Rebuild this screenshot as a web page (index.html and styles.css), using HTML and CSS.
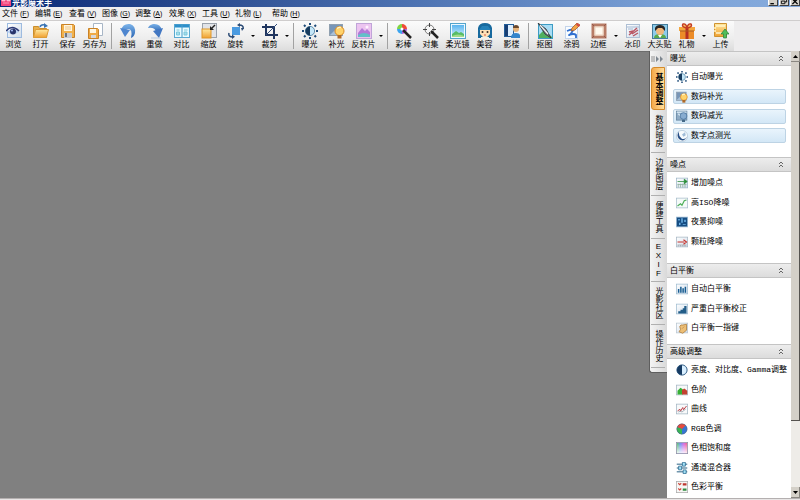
FILE: index.html
```html
<!DOCTYPE html>
<html lang="zh-CN">
<head>
<meta charset="utf-8">
<title>光影魔术手</title>
<link rel="stylesheet" href="styles.css">
</head>
<body>
<svg width="0" height="0" class="defs" aria-hidden="true">
  <defs>
    <linearGradient id="gold" x1="0" y1="0" x2="0" y2="1"><stop offset="0" stop-color="#ffe9a0"/><stop offset="1" stop-color="#f0a030"/></linearGradient>
    <linearGradient id="blue" x1="0" y1="0" x2="0" y2="1"><stop offset="0" stop-color="#7db4ea"/><stop offset="1" stop-color="#2b66b4"/></linearGradient>
    <linearGradient id="pale" x1="0" y1="0" x2="1" y2="1"><stop offset="0" stop-color="#ffffff"/><stop offset="1" stop-color="#cfdcea"/></linearGradient>
    <linearGradient id="sky" x1="0" y1="0" x2="0" y2="1"><stop offset="0" stop-color="#5ab4ee"/><stop offset="1" stop-color="#d4f0ff"/></linearGradient>
    <linearGradient id="hue"><stop offset="0" stop-color="#58c860"/><stop offset=".35" stop-color="#6a8cf0"/><stop offset=".7" stop-color="#d860e0"/><stop offset="1" stop-color="#f06078"/></linearGradient>
    <linearGradient id="fade" x1="0" y1="0" x2="0" y2="1"><stop offset="0" stop-color="#fff" stop-opacity="0"/><stop offset="1" stop-color="#fff" stop-opacity=".9"/></linearGradient>
    <symbol id="i-exposure" viewBox="0 0 16 16"><path d="M8 0v2M8 14v2M0 8h2M14 8h2M2 2l1.500 1.500M12.500 12.500L14 14M2 14l1.500-1.500M12.500 3.500L14 2" stroke="#1d4a78" stroke-width="2"/><circle cx="8" cy="8" r="4.600" fill="#c4e6f8" stroke="#5f8dab"/><path d="M8 3.400a4.600 4.600 0 0 0 0 9.200z" fill="#173b5e"/></symbol>
    <symbol id="i-fill" viewBox="0 0 16 16"><rect x=".5" y="1.500" width="13" height="11" fill="#7896b8" stroke="#90a0b0"/><path d="M1 12l5-5 3 5z" fill="#a8c0d8"/><circle cx="10.500" cy="8" r="4.500" fill="#ffd36b" stroke="#dc8a20"/><path d="M8 5.500q2-2 4-1" stroke="#fff5c8" fill="none" stroke-width="1.500"/><rect x="8.500" y="12" width="4" height="3.500" fill="#b06a28"/></symbol>
  </defs>
</svg>
<div class="window">
  <header class="titlebar">
    <svg class="logo" viewBox="0 0 10 8"><rect width="10" height="8" fill="#f3457c"/><path d="M1 1h3v2H1zM6 0h3v3H6zM2 5h6" fill="#ffb0c8" stroke="#ffd2df" stroke-width=".6"/></svg>
    <h1>光影魔术手</h1>
    <div class="winbuttons">
      <button aria-label="最小化"><svg viewBox="0 0 8 8"><path d="M1 6.500h4" stroke="#000" stroke-width="1.500"/></svg></button>
      <button aria-label="还原"><svg viewBox="0 0 8 8"><path d="M3 1.500h4v3H5M1 3.500h4v3H1z" fill="none" stroke="#000"/></svg></button>
      <button aria-label="关闭"><svg viewBox="0 0 8 8"><path d="M1 1l6 6M7 1L1 7" stroke="#000" stroke-width="1.500"/></svg></button>
    </div>
  </header>
  <nav class="menubar">
    <button>文件<span>(<u>F</u>)</span></button>
    <button>编辑<span>(<u>E</u>)</span></button>
    <button>查看<span>(<u>V</u>)</span></button>
    <button>图像<span>(<u>G</u>)</span></button>
    <button>调整<span>(<u>A</u>)</span></button>
    <button>效果<span>(<u>X</u>)</span></button>
    <button>工具<span>(<u>U</u>)</span></button>
    <button>礼物<span>(<u>L</u>)</span></button>
    <button>帮助<span>(<u>H</u>)</span></button>
  </nav>
  <div class="toolrow">
  <div class="toolbar" role="toolbar">
    <button class="tool"><svg viewBox="0 0 16 16"><rect x="1.500" y=".5" width="14" height="14" fill="url(#pale)" stroke="#9dbbe0"/><path d="M1 9q6-6 12 0-6 4-12 0z" fill="#b8cff0"/><path d="M0 8q6-7 13 0" fill="none" stroke="#2d3a78" stroke-width="1.500"/><circle cx="7" cy="8.500" r="3" fill="#27346c"/><circle cx="6" cy="7.500" r="1" fill="#a9c0f8"/></svg>浏览</button>
    <button class="tool"><svg viewBox="0 0 16 16"><path d="M.5 3.500h5l1 2h7v9H.5z" fill="#eab04a" stroke="#c98d2d"/><path d="M.5 14.500l2-8h13l-2 8z" fill="url(#gold)" stroke="#dc9c38"/><path d="M7 4q1-3 5-2" fill="none" stroke="#3974b4" stroke-width="1.500"/><path d="M11 0l4 3-4 2z" fill="#3974b4"/></svg>打开</button>
    <button class="tool"><svg viewBox="0 0 16 16"><path d="M1.500 1.500h12l1 1v12h-13z" fill="#f2b24c" stroke="#c98227"/><rect x="4" y="2" width="8" height="6" fill="#fff5df"/><path d="M5 4h6M5 6h6" stroke="#edc587"/><rect x="4" y="10" width="8" height="5" fill="#c9cbd0"/><path d="M6 10v4" stroke="#70757c" stroke-width="2"/></svg>保存</button>
    <button class="tool"><svg viewBox="0 0 16 16"><path d="M6.500.5h9v12h-9z" fill="#fff" stroke="#a8b6c6"/><path d="M1.500 5.500h9l1 1v9h-10z" fill="#efaa45" stroke="#c98227"/><rect x="3" y="6" width="6" height="4" fill="#fff5df"/><rect x="4" y="12" width="5" height="3" fill="#d7d8db"/></svg>另存为</button>
    <i class="sep"></i>
    <button class="tool"><svg viewBox="0 0 16 16"><path d="M1 7Q3 0 10 1q6 2 5 9-1 4-4 5 2-9-3-9-2 0-2 2z" fill="url(#blue)"/><path d="M0 5l10 2-5 7z" fill="#4f86cf"/></svg>撤销</button>
    <button class="tool"><svg viewBox="0 0 16 16"><path d="M15 7Q13 0 6 1 2 2 1 5q7-1 8 4z" fill="url(#blue)"/><path d="M16 5L6 8l6 7z" fill="#4277c2"/><path d="M4 15h10" stroke="#b9c9dd"/></svg>重做</button>
    <button class="tool"><svg viewBox="0 0 16 16"><rect x=".5" y="1.500" width="15" height="13" fill="#e9fbff" stroke="#5aa8d0"/><path d="M1 3h14" stroke="#2d8fca" stroke-width="3"/><path d="M8 2v12" stroke="#4a9cc8"/><path d="M2.500 7h3M2.500 9h3v3h-3zM10 7h3.500M10 9h3v3h-3z" fill="#a4dceb" stroke="#7cc8dc"/></svg>对比</button>
    <button class="tool"><svg viewBox="0 0 16 16"><rect x="1.500" y=".5" width="14" height="14" fill="#e2e4e8" stroke="#9aa2ac"/><rect x="1" y="6" width="9" height="9" fill="url(#gold)" stroke="#de962a"/><path d="M14 2l-4 4" stroke="#222" stroke-width="1.500"/><path d="M9 3v4h4z" fill="#222"/></svg>缩放</button>
    <button class="tool"><svg viewBox="0 0 16 16"><rect x="4" y="4" width="8" height="8" fill="#4a9ae0"/><path d="M1 10q-1 4 4 4M15 6q1-4-4-4" fill="none" stroke="#2a4a74" stroke-width="1.500"/><path d="M4 11.500v4.500l3-2.200zM12 0v4L9 2zM13 5h3l-2 3z" fill="#2a4a74"/></svg>旋转</button>
    <button class="drop" aria-label="旋转选项"></button>
    <button class="tool"><svg viewBox="0 0 16 16"><path d="M4 1v11h12M0 4h12v12" fill="none" stroke="#1f355f" stroke-width="2"/><path d="M4 12L15 1" stroke="#344f7c"/></svg>裁剪</button>
    <button class="drop" aria-label="裁剪选项"></button>
    <i class="sep"></i>
    <button class="tool"><svg><use href="#i-exposure"/></svg>曝光</button>
    <button class="tool"><svg><use href="#i-fill"/></svg>补光</button>
    <button class="tool"><svg viewBox="0 0 16 16"><rect x=".5" y=".5" width="15" height="15" fill="#ecc4f0" stroke="#c0a4d8"/><path d="M2 10l4-5 3 3 2-2 3 3v5H2z" fill="#b27ad8"/><path d="M2 12q6-4 12 0v2H2z" fill="#62c0c8"/><circle cx="11" cy="4" r="1.500" fill="#fff1ff"/></svg>反转片</button>
    <button class="drop" aria-label="反转片选项"></button>
    <i class="sep"></i>
    <button class="tool"><svg viewBox="0 0 16 16"><path d="M6 6V1a5 5 0 0 1 5 5z" fill="#f04c37"/><path d="M6 6h5a5 5 0 0 1-5 5z" fill="#b35ae0"/><path d="M6 6v5a5 5 0 0 1-5-5z" fill="#3ba4ef"/><path d="M6 6H1a5 5 0 0 1 5-5z" fill="#80d544"/><path d="M7 7l8 8" stroke="#222" stroke-width="2.500"/><circle cx="6" cy="6" r="1.500" fill="#fff"/></svg>彩棒</button>
    <button class="tool"><svg viewBox="0 0 16 16"><circle cx="6.500" cy="6.500" r="4.500" fill="#f5f5f5" stroke="#777"/><path d="M6.500 0v4M6.500 9v4M0 6.500h4M9 6.500h4" stroke="#444"/><path d="M8 8l7 7" stroke="#222" stroke-width="2.500"/></svg>对集</button>
    <button class="tool"><svg viewBox="0 0 16 16"><rect x=".5" y=".5" width="15" height="15" fill="#edf9ff" stroke="#55a4cb"/><rect x="2" y="2" width="12" height="12" fill="url(#sky)"/><path d="M2 11l4-3 3 2 2-1 3 2v3H2z" fill="#57bc68"/><path d="M2 13q6-3 12 0v1H2z" fill="#a1dc89"/></svg>柔光镜</button>
    <button class="tool"><svg viewBox="0 0 16 16"><path d="M1 15V5q1-5 7-5t7 5v10z" fill="#17699e"/><path d="M3 6h10v5q-5 7-10 0z" fill="#ffe0b7"/><path d="M2 7l3-4h6l3 4z" fill="#2380b8"/><circle cx="5.500" cy="9" r="1" fill="#392c27"/><circle cx="10.500" cy="9" r="1" fill="#392c27"/><path d="M7 12h2" stroke="#d65645"/><path d="M4 14h8v2H4z" fill="#f4f0e8"/></svg>美容</button>
    <button class="tool"><svg viewBox="0 0 16 16"><rect x=".5" y="1.500" width="9" height="12" fill="#dceeff" stroke="#235d98"/><path d="M1 2h3v11H1z" fill="#183e73"/><circle cx="12" cy="6" r="3" fill="#e6b278"/><path d="M9 5q0-3 3-3t3 3z" fill="#6a482c"/><path d="M7 15q0-5 5-5t4 5z" fill="#3485cb"/></svg>影楼</button>
    <i class="sep"></i>
    <button class="tool"><svg viewBox="0 0 16 16"><rect x="1.500" y="1.500" width="14" height="14" fill="#a8dcf4" stroke="#3d9cc4"/><path d="M2 12l5-5 8 7v1H2z" fill="#4fb060"/><path d="M1 0l8 6 5 9-6-4z" fill="#6c747c" stroke="#2c3236" stroke-width=".8"/><path d="M3 2l8 9" stroke="#f4f4f4" stroke-width="1.200"/></svg>抠图</button>
    <button class="tool"><svg viewBox="0 0 16 16"><rect x="1.500" y="3.500" width="12" height="12" fill="#f8fcff" stroke="#c4d4ea"/><path d="M3 8q8-3 5 1t-3 3q5-2 7 0v3" fill="none" stroke="#2f6fd0" stroke-width="1.800"/><path d="M7 8l1-3 5-5 3 2-5 5z" fill="#f2a446" stroke="#a85a2b" stroke-width=".8"/><path d="M13 0l3 2-1 2-3-2z" fill="#d44c45"/></svg>涂鸦</button>
    <button class="tool"><svg viewBox="0 0 16 16"><rect x="2" y="2" width="12" height="12" fill="#fffaf0" stroke="#b87c66" stroke-width="3"/><path d="M1 1l2 2m10 10l2 2m0-14l-2 2M3 13l-2 2" stroke="#93584a"/><rect x="4" y="4" width="8" height="8" fill="none" stroke="#ecd3bf"/></svg>边框</button>
    <button class="drop" aria-label="边框选项"></button>
    <button class="tool"><svg viewBox="0 0 16 16"><rect x="1.500" y="1.500" width="13" height="13" fill="url(#pale)" stroke="#aebfd4"/><path d="M2 4h12M3 6h5" stroke="#a5b9d3"/><path d="M4 12l8-7M7 11l6-4M8 13l5-3M4 9l4-1" stroke="#b95563" stroke-width="1.400"/></svg>水印</button>
    <button class="tool"><svg viewBox="0 0 16 16"><rect x=".5" y="1.500" width="15" height="14" fill="#8ccbea" stroke="#457c9b"/><path d="M2 15q0-4 6-4t6 4z" fill="#59a94a"/><circle cx="8" cy="8" r="4" fill="#efb77b"/><path d="M3 8V5q1-3 5-3t5 3v3l-3-3H6z" fill="#282523"/><path d="M6 12l2 3 2-3" fill="#fff"/></svg>大头贴</button>
    <button class="tool"><svg viewBox="0 0 16 16"><rect x="1" y="7" width="14" height="9" fill="#ec8c28"/><path d="M0 4h16v4H0z" fill="#f3a63e"/><path d="M8 4v12" stroke="#b53023" stroke-width="3"/><path d="M8 5Q2 4 4 1q3-1 4 4 1-5 4-4 2 3-4 4z" fill="#f8c065" stroke="#c33b25" stroke-width="1.400"/><path d="M1 8h14" stroke="#a75b20"/></svg>礼物</button>
    <button class="drop" aria-label="礼物选项"></button>
    <button class="tool"><svg viewBox="0 0 16 16"><path d="M1.500.5h12v13h-12z" fill="url(#gold)" stroke="#cf9230"/><path d="M3 3h9M3 10h6M1 5h2M1 8h2" stroke="#fff4c8" stroke-width="1.500"/><path d="M12 6l4 5h-2.500v4h-3v-4H8z" fill="#50bd5a" stroke="#278339" stroke-width=".7"/></svg>上传</button>
  </div>
  </div>
  <main class="body">
    <div class="canvas"></div>
    <div class="tabstrip">
      <div class="collapse"><svg viewBox="0 0 12 6"><path d="M1 0v6M3 0v6" stroke="#929292"/><path d="M5 0l3 3-3 3zM9 0l3 3-3 3z" fill="#7e8790"/></svg></div>
      <button class="tab active">基本调整</button>
      <button class="tab">数码暗房</button>
      <button class="tab">边框图层</button>
      <button class="tab">便捷工具</button>
      <button class="tab">EXIF</button>
      <button class="tab">光影社区</button>
      <button class="tab">操作历史</button>
    </div>
    <div class="panel">
      <section>
        <h2>曝光<svg viewBox="0 0 6 7"><path d="M1 3l2-2 2 2M1 6l2-2 2 2" fill="none" stroke="#666"/></svg></h2>
        <ul>
          <li><button><svg><use href="#i-exposure"/></svg>自动曝光</button></li>
          <li><button class="boxed"><svg><use href="#i-fill"/></svg>数码补光</button></li>
          <li><button class="boxed"><svg viewBox="0 0 16 16"><rect x=".5" y="1.500" width="14" height="12" fill="#8eabc5" stroke="#60819d"/><path d="M1 3h13M3 5l4 4" stroke="#d1e3f0" stroke-width="2"/><circle cx="10" cy="8" r="4.500" fill="#87acd0" stroke="#47739d"/><path d="M8 13h4v3H8z" fill="#456987"/></svg>数码减光</button></li>
          <li><button class="boxed"><svg viewBox="0 0 16 16"><circle cx="8" cy="8" r="7.500" fill="#f6fafd" stroke="#b4c8da"/><path d="M4 2Q0 7 4 12q6 5 11-3-4 5-8 2-4-3-3-9z" fill="#274f86"/><path d="M8 6l4-3 1 4-3 2z" fill="#9fbcd8"/></svg>数字点测光</button></li>
        </ul>
      </section>
      <section>
        <h2>噪点<svg viewBox="0 0 6 7"><path d="M1 3l2-2 2 2M1 6l2-2 2 2" fill="none" stroke="#666"/></svg></h2>
        <ul>
          <li><button><svg viewBox="0 0 16 16"><rect x=".5" y="1.500" width="15" height="13" fill="url(#pale)" stroke="#9eb6c8"/><path d="M3 9v5M6 9v5M9 9v5M12 9v5M2 10h12" stroke="#8fb09c"/><path d="M2 6h9M11 3l4 3-4 3z" fill="#288c35" stroke="#288c35"/></svg>增加噪点</button></li>
          <li><button><svg viewBox="0 0 16 16"><rect x=".5" y="1.500" width="15" height="13" fill="#f5faf9" stroke="#a7bdcb"/><path d="M2 12l4-3 2 2 3-6 3-1" fill="none" stroke="#4bae56" stroke-width="1.500"/></svg>高ISO降噪</button></li>
          <li><button><svg viewBox="0 0 16 16"><rect x=".5" y="1.500" width="15" height="13" fill="#164d83" stroke="#97b8d2"/><path d="M3 4h2v2H3zM7 3h2v6H7zM11 5h2v3h-2zM4 9h2v3H4zM9 11h4v1H9z" fill="#6fb4e8"/></svg>夜景抑噪</button></li>
          <li><button><svg viewBox="0 0 16 16"><rect x=".5" y="1.500" width="15" height="13" fill="url(#pale)" stroke="#a7b7c4"/><path d="M2 12h12M3 14v-2M6 14v-2M9 14v-2M12 14v-2" stroke="#a0a5aa"/><path d="M2 8h9M10 5l4 3-4 3" fill="none" stroke="#c6332c" stroke-width="1.500"/></svg>颗粒降噪</button></li>
        </ul>
      </section>
      <section class="tight">
        <h2>白平衡<svg viewBox="0 0 6 7"><path d="M1 3l2-2 2 2M1 6l2-2 2 2" fill="none" stroke="#666"/></svg></h2>
        <ul>
          <li><button><svg viewBox="0 0 16 16"><rect x=".5" y="1.500" width="15" height="13" fill="url(#pale)" stroke="#a0bdd1"/><path d="M3.500 13V8M6.500 13V5M9.500 13V7M12.500 13V5" stroke="#165c91" stroke-width="2"/></svg>自动白平衡</button></li>
          <li><button><svg viewBox="0 0 16 16"><rect x=".5" y="1.500" width="15" height="13" fill="url(#pale)" stroke="#a0bdd1"/><path d="M3 14v-3h3V9h3V7h2V4h3v10z" fill="#225d88"/></svg>严重白平衡校正</button></li>
          <li><button><svg viewBox="0 0 16 16"><rect x=".5" y="1.500" width="15" height="13" fill="url(#pale)" stroke="#b8c5d0"/><path d="M5 6q1-3 4-2l5-1v8l-5 4-5-2 2-3z" fill="#edbf76" stroke="#aa7836"/><path d="M8 9l3-3" stroke="#b98b50"/></svg>白平衡一指键</button></li>
        </ul>
      </section>
      <section>
        <h2>高级调整<svg viewBox="0 0 6 7"><path d="M1 3l2-2 2 2M1 6l2-2 2 2" fill="none" stroke="#666"/></svg></h2>
        <ul>
          <li><button><svg viewBox="0 0 16 16"><circle cx="8" cy="8" r="6.800" fill="#d9efff" stroke="#315e87" stroke-width="1.300"/><path d="M8 1.200a6.800 6.800 0 0 0 0 13.600z" fill="#163b63"/></svg>亮度、对比度、Gamma调整</button></li>
          <li><button><svg viewBox="0 0 16 16"><rect x=".5" y="1.500" width="15" height="13" fill="#f6f8f8" stroke="#a3b6c3"/><path d="M2 14V9l4-4 3 2v7z" fill="#37af35"/><path d="M8 14V8l3-2 4 3v5z" fill="#c34130"/></svg>色阶</button></li>
          <li><button><svg viewBox="0 0 16 16"><rect x=".5" y="1.500" width="15" height="13" fill="#f8f9fa" stroke="#a3b6c3"/><path d="M2 11l3-3 1 3 3-5 1 3 4-5" fill="none" stroke="#bc4048" stroke-width="1.300"/><path d="M3 12q3-2 5 0l5-4" fill="none" stroke="#8b9aa6"/></svg>曲线</button></li>
          <li><button><svg viewBox="0 0 16 16"><circle cx="8" cy="8" r="7" fill="#3576d2"/><path d="M8 8L1.500 5.500A7 7 0 0 1 13 3z" fill="#e64b3e"/><path d="M8 8L1.500 5.500A7 7 0 0 0 8 15z" fill="#38b553"/><circle cx="8" cy="8" r="6.800" fill="none" stroke="#52687c" stroke-width=".7"/></svg>RGB色调</button></li>
          <li><button><svg viewBox="0 0 16 16"><rect x="1" y="1" width="14" height="14" fill="url(#hue)"/><rect x="1" y="1" width="14" height="14" fill="url(#fade)"/><rect x=".5" y=".5" width="15" height="15" fill="none" stroke="#8d8da8"/></svg>色相饱和度</button></li>
          <li><button><svg viewBox="0 0 16 16"><path d="M1 3h14M1 8h14M1 13h14" stroke="#7196ad" stroke-width="2"/><path d="M8.500.5h4v5h-4zM3.500 5.500h4v5h-4zM9.500 10.500h4v5h-4z" fill="#a3e1f5" stroke="#28678d"/></svg>通道混合器</button></li>
          <li><button><svg viewBox="0 0 16 16"><rect x=".5" y=".5" width="15" height="15" fill="#f7f7f5" stroke="#aaa"/><path d="M3 3l2 2 2-2M3 10l2 2 2-2" fill="none" stroke="#cc4439" stroke-width="1.500"/><path d="M9 3h5v3H9z" fill="#bc362e"/><path d="M9 10h5v3H9z" fill="#318d41"/></svg>色彩平衡</button></li>
        </ul>
      </section>
    </div>
    <div class="scroll">
      <button aria-label="向上滚动"><svg viewBox="0 0 5 3"><path d="M0 3L2.500 0 5 3z"/></svg></button>
      <div class="thumb"></div>
      <div class="track"></div>
      <button aria-label="向下滚动"><svg viewBox="0 0 5 3"><path d="M0 0h5L2.500 3z"/></svg></button>
    </div>
  </main>
  <footer class="status"></footer>
</div>
</body>
</html>
```
FILE: styles.css
```css
* { box-sizing: border-box; }

body {
  margin: 0;
  font: 8px/10px "Liberation Sans", "Noto Sans CJK SC", sans-serif;
  color: #000;
  background: #ece9e8;
}

button {
  margin: 0;
  padding: 0;
  border: 0;
  background: none;
  font: inherit;
  color: inherit;
  white-space: nowrap;
}

svg { display: block; flex: none; }
.defs { position: absolute; }

.window {
  display: flex;
  flex-direction: column;
  height: 100vh;
  overflow: hidden;
}

/* Title bar */
.titlebar {
  display: flex;
  align-items: flex-end;
  height: 7px;
  flex: none;
  padding-left: 1px;
  overflow: hidden;
  background: linear-gradient(90deg, #0a2a78, #2b4b8f 25%, #4b70b0 50%, #7da3d8 85%, #86abdc);
}
.logo { width: 10px; height: 8px; margin-bottom: 1px; }
.titlebar h1 { margin: 0 0 0 1px; font-size: 8px; line-height: 7px; color: #fff; }
.winbuttons { display: flex; gap: 1px; margin: 0 0 1px auto; }
.winbuttons button {
  width: 10px;
  height: 9px;
  background: #d4d0c8;
  border: 1px solid #404040;
  border-left-color: #fff;
}
.winbuttons svg { width: 8px; height: 7px; }

/* Menu */
.menubar {
  display: grid;
  grid-template-columns: 33px 34px 33px 33px 34px 33px 33px 37px auto;
  justify-content: start;
  align-items: center;
  flex: none;
  height: 14px;
  padding-left: 2px;
  background: #f0eff0;
  border-bottom: 1px solid #cfcdcd;
}
.menubar button { text-align: left; }
.menubar span { margin-left: 2px; font-size: 7px; }

/* Toolbar */
.toolrow { flex: none; background: #eeedee; }
.toolbar {
  display: flex;
  width: max-content;
  height: 30px;
  background: linear-gradient(#fbfbfb, #ededed 60%, #dcdcdc);
}
.tool {
  display: flex;
  flex-direction: column;
  align-items: center;
  gap: 1px;
  width: 27px;
  padding-top: 2px;
}
.tool svg { width: 16px; height: 16px; }
.drop { display: flex; align-items: center; justify-content: center; width: 7px; }
.drop::before {
  content: "";
  border: 2px solid transparent;
  border-top-color: #000;
  border-bottom: 0;
}
.sep { width: 6px; margin: 2px 0; background: linear-gradient(#a2a2a2, #a2a2a2) center / 1px 100% no-repeat; }

/* Work area */
.body { display: flex; flex: 1; min-height: 0; background: #808080; }
.canvas { flex: 1; border-top: 1px solid #6c6c6c; }

.tabstrip {
  align-self: flex-start;
  width: 18px;
  padding: 0 2px 4px 1px;
  background: linear-gradient(90deg, #f4f4f4, #d9d9d9);
  border: 1px solid #5e5e5e;
  border-width: 0 0 1px 1px;
  border-radius: 0 0 0 3px;
}
.collapse { display: flex; align-items: center; height: 16px; }
.collapse svg { width: 12px; height: 6px; }
.tab {
  display: flex;
  align-items: center;
  justify-content: center;
  width: 14px;
  height: 43px;
  border-bottom: 1px solid #b0b0b0;
  writing-mode: vertical-rl;
  text-orientation: upright;
}
.tab.active {
  font-weight: bold;
  border: 1px solid #d48a2a;
  border-radius: 3px 0 0 3px;
  background: linear-gradient(90deg, #f5a94a, #ffdf9c);
}

.panel { width: 124px; overflow: hidden; background: #fff; }
.panel section { padding-bottom: 12px; }
.panel section.tight { padding-bottom: 6px; }
.panel h2 {
  display: flex;
  align-items: center;
  justify-content: space-between;
  height: 15px;
  margin: 0;
  padding: 0 7px 0 3px;
  font-size: 8px;
  font-weight: normal;
  background: linear-gradient(#ededed, #dcdcdc);
  border: 1px solid #c4c4c4;
  border-width: 1px 0;
}
.panel h2 svg { width: 6px; height: 7px; }
.panel ul { margin: 0; padding: 1px 5px 0 6px; list-style: none; }
.panel li { display: flex; align-items: center; height: 19px; }
.panel li:nth-child(odd) { height: 20px; }
.panel li button {
  display: flex;
  align-items: center;
  gap: 3px;
  width: 100%;
  height: 15px;
  padding-left: 2px;
  border: 1px solid transparent;
  border-radius: 2px;
  font-family: "Liberation Mono", "Noto Sans CJK SC", monospace;
}
.panel li svg { width: 12px; height: 12px; }
.panel li .boxed {
  border-color: #bdd3e4;
  background: linear-gradient(#e9f4fc, #d3e7f6);
}

/* Scroll bar */
.scroll {
  display: flex;
  flex-direction: column;
  width: 9px;
  background: #eeece8;
}
.scroll button {
  display: flex;
  align-items: center;
  justify-content: center;
  height: 11px;
  background: #d4d0c8;
  border: 1px solid #8a8781;
  border-width: 0 1px 1px 0;
}
.scroll svg { width: 5px; height: 3px; }
.thumb {
  flex: 359;
  background: #d4d0c8;
  border: 1px solid #55534f;
  border-width: 0 1px 1px 0;
}
.track { flex: 66; }

.status { flex: none; height: 2px; background: #e8e5e5; border-top: 1px solid #b4b0b0; }
```
